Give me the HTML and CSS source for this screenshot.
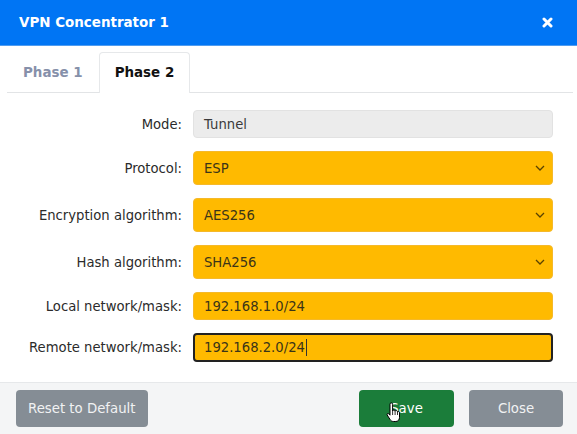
FILE: index.html
```html
<!DOCTYPE html>
<html>
<head>
<meta charset="utf-8">
<link rel="stylesheet" href="styles.css">
</head>
<body>
<div class="dialog">
  <header class="dlg-head">
    <h1 class="dlg-title">VPN Concentrator 1</h1>
    <span class="dlg-close" aria-label="Close">
      <svg width="11" height="11" viewBox="0 0 11 11"><path d="M2 2 L9 9 M9 2 L2 9" stroke="#fff" stroke-width="3" stroke-linecap="round"/></svg>
    </span>
  </header>
  <nav class="tabs">
    <div class="tab">Phase 1</div>
    <div class="tab active">Phase 2</div>
  </nav>
  <div class="form">
    <label class="lbl">Mode:</label>
    <div class="field ro">Tunnel</div>

    <label class="lbl">Protocol:</label>
    <div class="field sel">ESP<svg class="chev" width="10" height="6" viewBox="0 0 10 6"><path d="M1 1 L5 5 L9 1" fill="none" stroke="#5a4300" stroke-width="1.3"/></svg></div>

    <label class="lbl">Encryption algorithm:</label>
    <div class="field sel">AES256<svg class="chev" width="10" height="6" viewBox="0 0 10 6"><path d="M1 1 L5 5 L9 1" fill="none" stroke="#5a4300" stroke-width="1.3"/></svg></div>

    <label class="lbl">Hash algorithm:</label>
    <div class="field sel">SHA256<svg class="chev" width="10" height="6" viewBox="0 0 10 6"><path d="M1 1 L5 5 L9 1" fill="none" stroke="#5a4300" stroke-width="1.3"/></svg></div>

    <label class="lbl">Local network/mask:</label>
    <div class="field txt">192.168.1.0/24</div>

    <label class="lbl">Remote network/mask:</label>
    <div class="field txt focus">192.168.2.0/24<span class="caret"></span></div>
  </div>
  <footer class="dlg-foot">
    <button class="btn gray">Reset to Default</button>
    <div class="spacer"></div>
    <button class="btn green save">Save
      <svg class="hand" width="14" height="21" viewBox="0 0 14 21"><path d="M4 2.2 a1.3 1.3 0 0 1 2.6 0 V9 a1.25 1.25 0 0 1 2.5 0.3 a1.25 1.25 0 0 1 2.4 0.5 a1.2 1.2 0 0 1 2 0.9 V15.5 c0 2.2 -1.5 4 -3.7 4 H7.4 c-1.6 0 -2.6 -0.8 -3.4 -2.1 L1.2 13 c-0.6 -1.1 0.7 -2.1 1.6 -1.2 L4 13.2 Z" fill="#fff" stroke="#000" stroke-width="1"/><path d="M6.6 9 V13 M9.1 9.4 V13 M11.5 10 V13" stroke="#000" stroke-width="0.8"/></svg>
    </button>
    <button class="btn gray">Close</button>
  </footer>
</div>
</body>
</html>
```
FILE: styles.css
```css
html, body {
  margin: 0;
  padding: 0;
  background: #ffffff;
}
body {
  font-family: "DejaVu Sans", Verdana, sans-serif;
  font-size: 13.2px;
  color: #2b2b2b;
}
.dialog {
  width: 577px;
  height: 434px;
  display: flex;
  flex-direction: column;
  background: #fff;
  overflow: hidden;
}
.dlg-head {
  height: 46px;
  flex: none;
  background: #0075f4;
  display: flex;
  align-items: center;
  justify-content: space-between;
  padding: 0 24px 0 19px;
  border-bottom: 1px solid #4f9cf0;
  box-sizing: border-box;
}
.dlg-title {
  margin: 0;
  font-size: 13.45px;
  font-weight: bold;
  color: #fff;
}
.dlg-close {
  display: flex;
  width: 11px;
  height: 11px;
}
.tabs {
  display: flex;
  margin: 0 4px 0 7px;
  padding-top: 6px;
  border-bottom: 1px solid #e2e4e6;
  height: 47px;
  box-sizing: border-box;
  flex: none;
}
.tab {
  height: 41px;
  line-height: 40px;
  padding: 0 15px;
  box-sizing: border-box;
  border: 1px solid transparent;
  border-bottom: none;
  font-weight: bold;
  font-size: 13.45px;
  color: #8690aa;
  border-radius: 4px 4px 0 0;
}
.tab.active {
  color: #111;
  border-color: #e6e8ea;
  background: #fff;
}
.form {
  flex: 1;
  display: grid;
  grid-template-columns: 182px 360px;
  grid-template-rows: 28px 34px 34px 34px 28px 29px;
  column-gap: 11px;
  row-gap: 13px;
  padding-top: 17px;
  align-content: start;
}
.lbl {
  text-align: right;
  align-self: center;
  color: #2b2b2b;
}
.field {
  box-sizing: border-box;
  border-radius: 4px;
  display: flex;
  align-items: center;
  padding-left: 10px;
  position: relative;
}
.ro {
  background: #ececec;
  border: 1px solid #e2e2e2;
  color: #3a3a3a;
}
.sel, .txt {
  background: #ffba00;
  border: 1px solid #f5b92a;
  color: #3b3418;
}
.chev {
  position: absolute;
  right: 7px;
  top: 50%;
  margin-top: -3px;
}
.focus {
  border: 2px solid #222;
  padding-left: 9px;
}
.caret {
  display: inline-block;
  width: 1px;
  height: 17px;
  background: #333;
  margin-left: 1px;
}
.dlg-foot {
  height: 52px;
  flex: none;
  box-sizing: border-box;
  border-top: 1px solid #e6e8ea;
  background: #f4f5f6;
  display: flex;
  align-items: flex-start;
  padding: 7px 14px 0 16px;
  column-gap: 15px;
}
.spacer {
  flex: 1;
}
.btn {
  height: 37px;
  border: none;
  border-radius: 4px;
  font-family: "DejaVu Sans", Verdana, sans-serif;
  font-size: 13.3px;
  color: #fff;
  padding: 0 12px;
  box-sizing: border-box;
  position: relative;
}
.gray {
  background: #858d95;
  color: #f1f2f3;
}
.btn.gray:last-child {
  width: 94px;
}
.green {
  background: #1b7d3a;
  width: 95px;
}
.hand {
  position: absolute;
  left: 27px;
  top: 12px;
}
```
